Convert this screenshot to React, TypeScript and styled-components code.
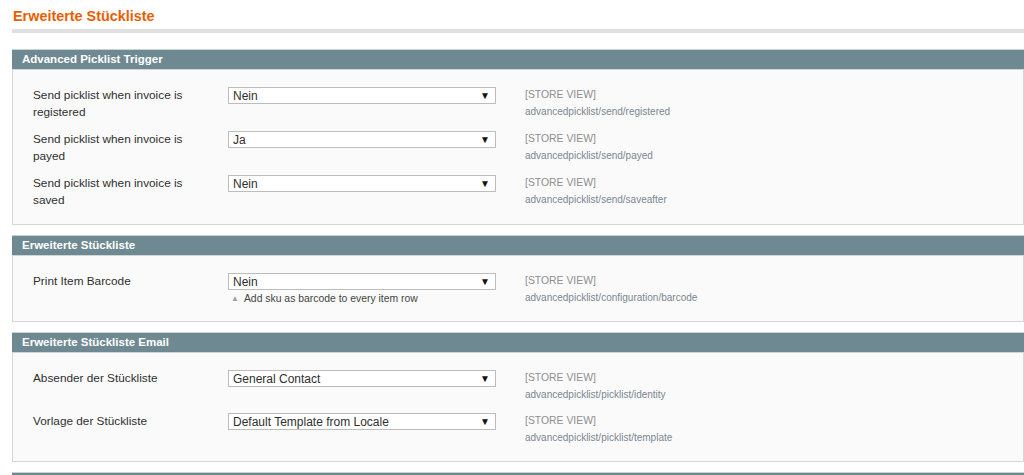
import React from 'react';
import styled, { createGlobalStyle } from 'styled-components';

const GlobalStyle = createGlobalStyle`
  html, body {
    margin: 0;
    padding: 0;
    background: #ffffff;
    font-family: 'Liberation Sans', Arial, sans-serif;
    font-size: 12px;
    color: #2f2f2f;
  }
`;

type Field = {
  label: string;
  value: string;
  path: string;
  hint?: string;
};

type Group = {
  title: string;
  fields: Field[];
};

const groups: Group[] = [
  {
    title: 'Advanced Picklist Trigger',
    fields: [
      { label: 'Send picklist when invoice is registered', value: 'Nein', path: 'advancedpicklist/send/registered' },
      { label: 'Send picklist when invoice is payed', value: 'Ja', path: 'advancedpicklist/send/payed' },
      { label: 'Send picklist when invoice is saved', value: 'Nein', path: 'advancedpicklist/send/saveafter' },
    ],
  },
  {
    title: 'Erweiterte Stückliste',
    fields: [
      {
        label: 'Print Item Barcode',
        value: 'Nein',
        path: 'advancedpicklist/configuration/barcode',
        hint: 'Add sku as barcode to every item row',
      },
    ],
  },
  {
    title: 'Erweiterte Stückliste Email',
    fields: [
      { label: 'Absender der Stückliste', value: 'General Contact', path: 'advancedpicklist/picklist/identity' },
      { label: 'Vorlage der Stückliste', value: 'Default Template from Locale', path: 'advancedpicklist/picklist/template' },
    ],
  },
  { title: '', fields: [] },
];

const App: React.FC = () => {
  return (
    <Page>
      <GlobalStyle />
      <ContentHeader>
        <PageTitle>Erweiterte Stückliste</PageTitle>
      </ContentHeader>

      {groups.map((group, i) => (
        <Section key={i}>
          <SectionHead>{group.title}</SectionHead>
          {group.fields.length > 0 && (
            <SectionBody>
              {group.fields.map((field) => (
                <FieldRow key={field.path}>
                  <Label>{field.label}</Label>
                  <ValueCell>
                    <SelectBox>
                      <span>{field.value}</span>
                      <Arrow>▼</Arrow>
                    </SelectBox>
                    {field.hint && (
                      <Hint>
                        <HintArrow>▲</HintArrow>
                        {field.hint}
                      </Hint>
                    )}
                  </ValueCell>
                  <Scope>
                    <ScopeLabel>[STORE VIEW]</ScopeLabel>
                    <ScopePath>{field.path}</ScopePath>
                  </Scope>
                </FieldRow>
              ))}
            </SectionBody>
          )}
        </Section>
      ))}
    </Page>
  );
};
export default App;

const Page = styled.div`
  padding-left: 12px;
  height: 475px;
  overflow: hidden;
`;

const ContentHeader = styled.div`
  height: 29px;
  border-bottom: 4px solid #e0e0e0;
  margin-bottom: 16px;
  display: flex;
  align-items: center;
`;

const PageTitle = styled.h3`
  margin: 0 0 -3px 1px;
  font-size: 14.4px;
  font-weight: bold;
  color: #eb5e00;
`;

const Section = styled.div`
  margin-bottom: 10px;
`;

const SectionHead = styled.div`
  height: 19px;
  border-top: 1px solid #c9d3d6;
  border-bottom: 1px solid #cfd6d8;
  background: #6f8992;
  color: #ffffff;
  font-weight: bold;
  font-size: 11.5px;
  line-height: 19px;
  padding-left: 10px;
`;

const SectionBody = styled.div`
  background: #fafafa;
  border: 1px solid #d6d6d6;
  border-top: none;
  padding: 12px 0 10px 20px;
`;

const FieldRow = styled.div`
  display: grid;
  grid-template-columns: 195px 268px auto;
  padding: 5px 0;
  min-height: 33px;
`;

const Label = styled.div`
  width: 175px;
  line-height: 17px;
  font-size: 11.8px;
  color: #2f2f2f;
`;

const ValueCell = styled.div`
  display: flex;
  flex-direction: column;
`;

const SelectBox = styled.div`
  box-sizing: border-box;
  height: 17px;
  border: 1px solid #bdbdbd;
  background: #ffffff;
  display: flex;
  align-items: center;
  justify-content: space-between;
  padding: 0 5px 0 4px;
  font-size: 12px;
  color: #2f2f2f;
`;

const Arrow = styled.span`
  font-size: 10px;
  color: #111111;
`;

const Hint = styled.div`
  margin-top: 2px;
  padding-left: 3px;
  font-size: 10.4px;
  line-height: 14px;
  color: #444444;
  display: flex;
  align-items: center;
`;

const HintArrow = styled.span`
  font-size: 8px;
  color: #a0a0a0;
  margin-right: 5px;
`;

const Scope = styled.div`
  padding-left: 29px;
  display: flex;
  flex-direction: column;
`;

const ScopeLabel = styled.div`
  font-size: 10.4px;
  line-height: 16.5px;
  color: #8f8f8f;
`;

const ScopePath = styled.div`
  font-size: 10px;
  line-height: 16.5px;
  color: #7a8790;
`;
